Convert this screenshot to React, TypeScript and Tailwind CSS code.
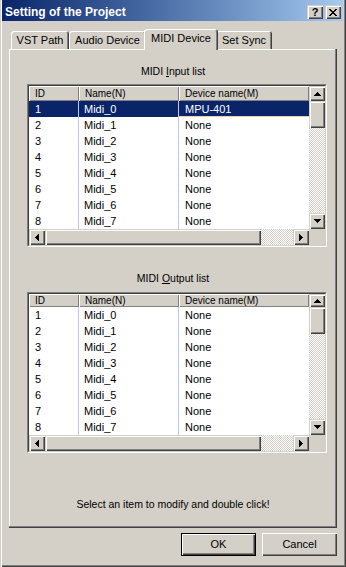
import type { ReactNode } from 'react'

// classic win2000 bevels
const raised =
  'shadow-[inset_1px_1px_0_#d4d0c8,inset_2px_2px_0_#fff,inset_-1px_-1px_0_#404040,inset_-2px_-2px_0_#808080]'
const headerBevel = 'shadow-[inset_1px_1px_0_#fff,inset_-1px_-1px_0_#808080]'
const checker =
  'bg-[image:repeating-conic-gradient(#fff_0_25%,#d4d0c8_0_50%)] bg-[length:2px_2px]'

const arrows = {
  up: { w: 7, h: 4, d: 'M3 0h1v1h-1z M2 1h3v1h-3z M1 2h5v1h-5z M0 3h7v1h-7z' },
  down: { w: 7, h: 4, d: 'M0 0h7v1h-7z M1 1h5v1h-5z M2 2h3v1h-3z M3 3h1v1h-1z' },
  left: { w: 4, h: 7, d: 'M0 3h1v1h-1z M1 2h1v3h-1z M2 1h1v5h-1z M3 0h1v7h-1z' },
  right: { w: 4, h: 7, d: 'M0 0h1v7h-1z M1 1h1v5h-1z M2 2h1v3h-1z M3 3h1v1h-1z' },
}

function Arrow({ dir }: { dir: keyof typeof arrows }) {
  const a = arrows[dir]
  return (
    <svg width={a.w} height={a.h} viewBox={`0 0 ${a.w} ${a.h}`} shapeRendering="crispEdges">
      <path d={a.d} fill="#000" />
    </svg>
  )
}

function Btn3d({ className = '', children }: { className?: string; children?: ReactNode }) {
  return (
    <div className={`flex shrink-0 items-center justify-center bg-[#d4d0c8] ${raised} ${className}`}>
      {children}
    </div>
  )
}

function ListView({ devices, headerH }: { devices: string[]; headerH: string }) {
  return (
    <div className="ml-[18px] w-[300px] border border-t-[#808080] border-l-[#808080] border-r-white border-b-white">
      <div className="border border-t-[#404040] border-l-[#404040] border-r-[#d4d0c8] border-b-[#d4d0c8] bg-white">
        <div className="flex">
          <div className="w-[280px]">
            {/* header */}
            <div className={`flex text-[10px] ${headerH}`}>
              <div className={`flex w-[50px] items-center bg-[#d4d0c8] pl-[6px] ${headerBevel}`}>ID</div>
              <div className={`flex w-[100px] items-center bg-[#d4d0c8] pl-[6px] ${headerBevel}`}>Name(N)</div>
              <div className={`flex w-[130px] items-center bg-[#d4d0c8] pl-[6px] ${headerBevel}`}>
                Device name(M)
              </div>
            </div>
            {devices.map((dev, i) => {
              const sel = dev === 'MPU-401'
              return (
                <div
                  key={i}
                  className={`flex h-[16px] text-[11px] ${sel ? 'bg-[#0a246a] text-white' : 'text-black'}`}
                >
                  <div className="flex w-[50px] items-center border-r border-[#c4c4f4] pl-[6px]">{i + 1}</div>
                  <div className="flex w-[100px] items-center border-r border-[#c4c4f4] pl-[5px]">
                    Midi_{i}
                  </div>
                  <div
                    className={`flex w-[130px] items-center pl-[6px] ${sel ? 'shadow-[inset_0_-1px_0_#f0d0a0]' : ''}`}
                  >
                    {dev}
                  </div>
                </div>
              )
            })}
          </div>
          {/* vertical scrollbar */}
          <div className="flex w-[16px] flex-col">
            <Btn3d className={`w-[16px] ${headerH}`}>
              <Arrow dir="up" />
            </Btn3d>
            <Btn3d className="h-[27px] w-[16px]" />
            <div className={`flex-1 ${checker}`} />
            <Btn3d className="h-[16px] w-[16px]">
              <Arrow dir="down" />
            </Btn3d>
          </div>
        </div>
        {/* horizontal scrollbar */}
        <div className="flex h-[16px]">
          <Btn3d className="h-[16px] w-[16px]">
            <Arrow dir="left" />
          </Btn3d>
          <Btn3d className="h-[16px] w-[216px]" />
          <div className={`w-[32px] ${checker}`} />
          <Btn3d className="h-[16px] w-[16px]">
            <Arrow dir="right" />
          </Btn3d>
          <div className="w-[16px] bg-[#d4d0c8]" />
        </div>
      </div>
    </div>
  )
}

const inputDevices = ['MPU-401', 'None', 'None', 'None', 'None', 'None', 'None', 'None']
const outputDevices = ['None', 'None', 'None', 'None', 'None', 'None', 'None', 'None']

const tabs = [
  { label: 'VST Path', w: 'w-[58px]' },
  { label: 'Audio Device', w: 'w-[77px]' },
  { label: 'MIDI Device', w: 'w-[74px]', active: true },
  { label: 'Set Sync', w: 'w-[56px]' },
]

export default function App() {
  return (
    <div className="flex h-[567px] w-[346px] flex-col overflow-hidden bg-[#d4d0c8] font-['Liberation_Sans',Arial,sans-serif] text-black shadow-[inset_1px_0_0_#d4d0c8,inset_2px_0_0_#fff,inset_-1px_-1px_0_#404040,inset_-2px_-2px_0_#808080]">
      {/* Title bar */}
      <div className="ml-[2px] mr-[3px] flex h-[21px] items-start bg-linear-to-r from-[#0a246a] to-[#a6caf0]">
        <span className="pl-[3px] pt-[5px] text-[12px] font-bold leading-[14px] text-white">
          Setting of the Project
        </span>
        <div className="ml-auto mr-[2px] mt-[5px] flex gap-[2px]">
          <Btn3d className="h-[14px] w-[16px]">
            <span className="text-[11px] font-bold leading-[14px]">?</span>
          </Btn3d>
          <Btn3d className="h-[14px] w-[16px]">
            <svg width="8" height="7" viewBox="0 0 8 7" shapeRendering="crispEdges">
              <path
                d="M0 0h2v1h-2z M6 0h2v1h-2z M1 1h2v1h-2z M5 1h2v1h-2z M2 2h4v1h-4z M3 3h2v1h-2z M2 4h4v1h-4z M1 5h2v1h-2z M5 5h2v1h-2z M0 6h2v1h-2z M6 6h2v1h-2z"
                fill="#000"
              />
            </svg>
          </Btn3d>
        </div>
      </div>

      {/* Tabs */}
      <div className="ml-[11px] mt-[8px] flex h-[20px] items-end">
        {tabs.map((t) =>
          t.active ? (
            <div
              key={t.label}
              className={`relative z-10 -mx-[2px] -mb-[1px] h-[21px] ${t.w} rounded-t-[3px] bg-[#d4d0c8] pt-[3px] text-center text-[11px] leading-[13px] shadow-[inset_1px_1px_0_#fff,inset_-1px_0_0_#404040,inset_-2px_0_0_#808080]`}
            >
              {t.label}
            </div>
          ) : (
            <div
              key={t.label}
              className={`h-[18px] ${t.w} rounded-t-[3px] bg-[#d4d0c8] pt-[3px] text-center text-[11px] leading-[13px] shadow-[inset_1px_1px_0_#fff,inset_-1px_0_0_#404040,inset_-2px_0_0_#808080]`}
            >
              {t.label}
            </div>
          ),
        )}
      </div>

      {/* Tab panel */}
      <div className="ml-[9px] flex h-[479px] w-[328px] flex-col shadow-[inset_-1px_-1px_0_#404040,inset_-2px_-2px_0_#808080,inset_1px_1px_0_#fff]">
        <div className="mt-[16px] h-[13px] text-center text-[10.5px] leading-[13px]">
          MIDI <span className="underline">I</span>nput list
        </div>
        <div className="mt-[6px]">
          <ListView devices={inputDevices} headerH="h-[15px]" />
        </div>

        <div className="mt-[25px] h-[13px] text-center text-[10.5px] leading-[13px]">
          MIDI <span className="underline">O</span>utput list
        </div>
        <div className="mt-[7px]">
          <ListView devices={outputDevices} headerH="h-[13px]" />
        </div>

        <div className="mt-[45px] h-[13px] text-center text-[10.5px] leading-[13px]">
          Select an item to modify and double click!
        </div>
      </div>

      {/* Buttons */}
      <div className="mr-[9px] mt-[5px] flex justify-end gap-[6px]">
        <div className="flex h-[23px] w-[75px] items-center justify-center border border-black bg-[#d4d0c8] text-[11px] shadow-[inset_1px_1px_0_#fff,inset_-1px_-1px_0_#404040,inset_-2px_-2px_0_#808080]">
          OK
        </div>
        <div className="flex h-[23px] w-[75px] items-center justify-center bg-[#d4d0c8] text-[11px] shadow-[inset_1px_1px_0_#fff,inset_-1px_-1px_0_#404040,inset_-2px_-2px_0_#808080]">
          Cancel
        </div>
      </div>
    </div>
  )
}
